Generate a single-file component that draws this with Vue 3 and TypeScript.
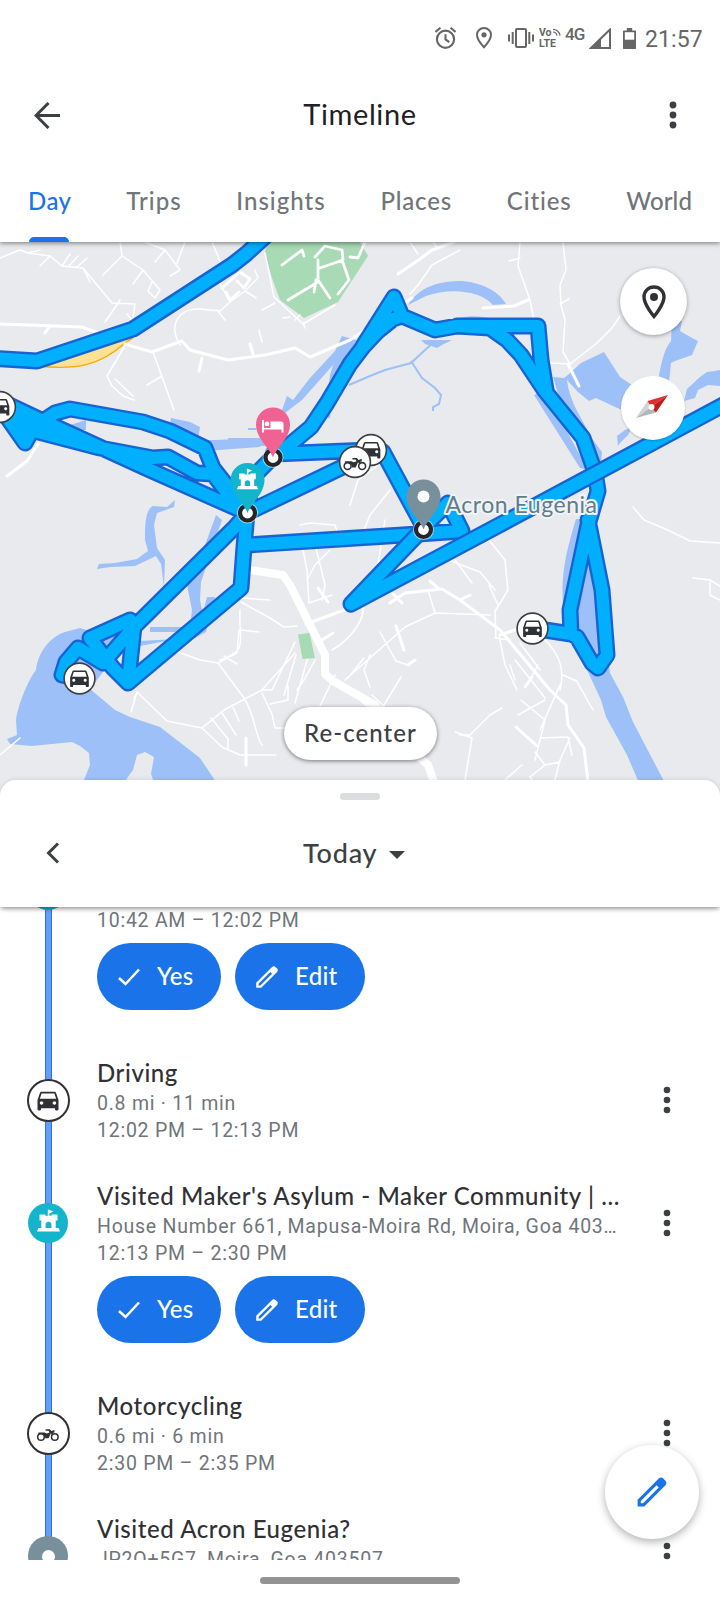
<script setup lang="ts">
interface Tab { label: string; cls: string }
interface Entry {
  kind: 'visit' | 'move'
  icon: 'castle' | 'car' | 'moto' | 'pin'
  title: string
  detail: string
  time: string
  cls: string
}
interface Marker { x: number; y: number; icon: 'car' | 'moto' }
interface Pin { x: number; y: number; color: string; icon: 'bed' | 'castle' | 'dot' }

const tabs: Tab[] = [
  { label: 'Day', cls: 'day' },
  { label: 'Trips', cls: 'trips' },
  { label: 'Insights', cls: 'insights' },
  { label: 'Places', cls: 'places' },
  { label: 'Cities', cls: 'cities' },
  { label: 'World', cls: 'world' },
]

const entries: Entry[] = [
  { kind: 'visit', icon: 'castle', title: '', detail: '', time: '10:42 AM – 12:02 PM', cls: 'first' },
  { kind: 'move', icon: 'car', title: 'Driving', detail: '0.8 mi · 11 min', time: '12:02 PM – 12:13 PM', cls: 'driving' },
  { kind: 'visit', icon: 'castle', title: "Visited Maker's Asylum - Maker Community | ...", detail: 'House Number 661, Mapusa-Moira Rd, Moira, Goa 403…', time: '12:13 PM – 2:30 PM', cls: 'maker' },
  { kind: 'move', icon: 'moto', title: 'Motorcycling', detail: '0.6 mi · 6 min', time: '2:30 PM – 2:35 PM', cls: 'motor' },
  { kind: 'visit', icon: 'pin', title: 'Visited Acron Eugenia?', detail: 'JP2Q+5G7, Moira, Goa 403507', time: '', cls: 'acron' },
]

const carPath = 'M18.92 6.01C18.72 5.42 18.16 5 17.5 5h-11c-.66 0-1.21.42-1.42 1.01L3 12v8c0 .55.45 1 1 1h1c.55 0 1-.45 1-1v-1h12v1c0 .55.45 1 1 1h1c.55 0 1-.45 1-1v-8l-2.08-5.99zM6.5 16c-.83 0-1.5-.67-1.5-1.5S5.67 13 6.5 13s1.5.67 1.5 1.5S7.33 16 6.5 16zm11 0c-.83 0-1.5-.67-1.5-1.5s.67-1.5 1.5-1.5 1.5.67 1.5 1.5-.67 1.5-1.5 1.5zM5 11l1.5-4.5h11L19 11H5z'
const pencilPath = 'M20.41 4.94l-1.35-1.35c-.78-.78-2.05-.78-2.83 0L3 16.82V21h4.18L20.41 7.77c.79-.78.79-2.05 0-2.83zM6.41 19.06L5 19v-1.36l9.82-9.82 1.41 1.41-9.82 9.83z'
const castlePath = 'M11.4 1v5.8H9.200V5.800H4v5.400h1.600v6.600H3l-1.200 3h20.400l-1.200-3h-2.600v-6.600H20V5.800h-5.200v1h-2V4.800L16.400 3zM12 12.200a2.600 2.600 0 0 1 2.600 2.600v3H9.400v-3a2.600 2.600 0 0 1 2.600-2.600z'
const motoPath = 'M9.6 6.2h4.2l1.6 1.9 3-1.1v2.6l-1.8.3 1 1.6-1.3.8-1.4-2-2.3 5H9.4l-1.1-2.8L5.2 11H2.4V9.4h6.2l2.2 1 2.7-1-1-1.6H9.6z'

/* Each layer is stroked as one shape, so overlapping legs inside a layer merge. */
const routeLayers: string[] = [
  [
    'M-12 358 37 361 133 329 232 265 246 254 270 232',
    'M2 410 25 443 35 425 43 421',
    'M0 408 35 431 100 448 153 458 168 457 197 473 213 474 238 507',
    'M43 421 55 413 70 409 143 422 170 431 205 448 213 468 238 500 247 513',
    'M-10 396 43 421 150 470 247 513',
    'M247 513 252 478 273 457 287 447 311 427 327 403 350 364 363 347 378 331 393 319 402 316',
    'M363 346 394 297 402 316 435 330 457 326 538 326 541 360 546 390',
    'M457 326 490 328 507 340 521 355 545 391 583 438 595 472 598 491 588 525',
    'M247 513 244 547 241 588 128 683 134 626 130 620 90 638 113 668 128 683',
    'M247 513 235 527 134 627 103 663 78 648 66 662 62 675 80 679',
    'M247 545 403 535 462 531 448 503 423 528',
    'M273 454 371 450 383 452 424 528',
    'M247 513 355 461',
    'M588 520 602 590 607 655 598 668 592 663 577 637 571 634 532 628',
    'M588 525 570 610 571 634',
  ].join(''),
  'M421 531 351 604 490 530 740 396',
]

const water: string[] = [
  'M17 735 16 720C18 705 28 680 36 670C38 652 50 637 65 632L80 628 90 631 130 612 143 620 90 689 115 710 130 717 160 727 200 758 218 785H155L151 774 154 757 145 752 137 755 133 770 122 785H82L90 765 89 753 80 746 72 742 32 746 10 744 7 739z',
  'M175 500 167 507 153 506C145 510 145 525 145 540L148 551 137 559 115 563 99 564 97 569 110 567 135 566 156 556 161 564 164 587 165 560 157 548 154 525 157 513 174 507z',
  'M216 515 205 545 187 585 192 610 190 627H150V632H192L205 626 200 600 201 582 222 520z',
  'M140 641 195 638 206 632 215 597H207L200 624 187 637 140 646z',
  'M170 424 171 418 190 422 200 427 198 440 215 440 260 438V447L205 451 165 437z',
  'M70 425 86 420V430L78 430z',
  'M228 446H280V438H228z',
  'M282 410 287 396 293 400 310 378 335 351 342 336 356 340 350 364 327 403 330 375 333 365 302 400 285 413z',
  'M408 305C420 286 440 281 462 281C485 283 500 293 506 304L493 305C482 291 450 287 426 296z',
  'M421 340H452L442 345 437 348 425 344z',
  'M460 318C475 314 485 318 495 319L470 324z',
  'M553 377 564 378 569 374 581 363 604 352 620 377 632 385 628 413 596 398 589 401 578 392 567 380C570 405 584 420 590 436L602 452 601 463 590 464 560 400z',
  'M545 391 534 395 580 468 588 470z',
  'M672 320 682 321 680 331 692 338 698 341 692 355 675 361 671 363 669 382 658 381C662 360 664 350 671 341z',
  'M684 401 687 389 700 377 707 372 715 371 720 370V386L708 385 698 390 695 398z',
  'M618 446 617 436 625 430 633 426 628 435 620 443z',
  'M576 519C562 565 560 585 565 625L588 672 601 700 606 717 627 755 640 785H666L633 722 623 697 610 673 607 650 590 520z',
]

const roadsThin = 'M0 258 20 250 28 253 40 250M28 253 50 256 62 266 83 268 112 303 135 304 133 318M83 268 90 282M50 256 40 266M62 266 70 254M68 267 78 256M76 268 87 258M120 242 122 256 103 275M122 256 143 270 133 284M143 270 160 290 155 298 148 291 152 282M145 242 165 250 180 270 170 276M165 250 155 262M185 242 177 263M120 300 110 315 105 322M133 322 127 314M126 344 107 376 112 386 123 396 134 400M115 379 133 396M153 352 174 410M162 376 147 385M180 345C168 325 178 308 200 309L220 311 230 302 219 282M217 310 225 320M230 302 245 291 256 298M255 270 258 278 245 291M212 242 222 266M265 253 274 297 303 324 335 305M295 320 300 315M262 310 275 303M303 323 305 328M262 342 259 330M283 318 290 317M410 294 418 285 432 265 460 250M410 242 418 254M433 242 438 249M520 242 518 266 530 300 536 330 531 360M509 261 520 258M563 242 566 270 560 285 561 305 565 320 563 352 570 364 597 343 612 328 620 316M560 304 569 299M536 359 552 363 570 364M633 507 644 520 668 530 690 541 720 543M693 578 710 580 720 586M710 582 710 595 720 600M240 598 270 600M240 610C238 640 250 650 220 660M241 602 270 618 284 627 297 626M241 630 259 632M156 655 178 652 200 660 218 663 244 698C255 715 255 735 262 745M218 663 237 653 239 630M224 656 237 664M134 698 137 692M131 712 137 692 167 721 202 728 222 747 240 755 276 755M202 728 224 710 262 690 295 653M211 718 228 739 228 748M222 713 236 735M232 705 239 721M295 642 272 690 261 690M262 693 272 714 275 728 290 728M270 704 288 700 288 686M302 545 307 570 309 603 332 595M307 580 315 565 330 550M316 548 325 585 322 600M284 695 296 655M315 660 304 680 297 690M310 650 295 703M332 650C350 640 365 620 363 606M345 680 405 627 435 613 490 615M435 613 428 590M380 632 396 661 408 665M370 655 364 670 370 687M372 695 388 710M364 658 348 678M335 675 320 706M401 677 384 705 375 710M342 685 395 730M300 525 310 523 335 525 338 535M350 505 358 480 385 460M360 540 370 515 390 490M378 565 385 520M440 557 480 572 495 590M455 560 472 583M485 535 505 560 508 590 496 610M495 610 496 638M499 635 505 665 517 690M498 605 489 585M495 638 510 640M545 640C560 655 565 670 560 690M563 675 576 681M576 680 593 710M560 685 540 730M515 680 510 665M515 660 535 685 545 698M502 708 490 715 470 735 460 735M545 700 518 715M455 732 472 738 465 780M540 738 568 737M570 738 560 760 555 780M568 737 572 755M521 700 545 720 535 760M535 752 545 765 560 762M545 765 530 777 535 785M522 765 505 780M538 665 530 680M520 643 540 670M0 755 20 738'
const roadsMedium = 'M0 324 82 327 98 333M45 333 50 326M125 344 152 352 182 341 190 350 228 360 265 355 295 348 310 357 350 340 380 320 412 298M202 358 199 371M253 354 250 344M398 274 420 259 432 250 454 242M483 308 514 306 528 300M568 364 579 386M7 476 27 461 38 444M306 624 350 608M390 603 405 593 442 589 460 600 500 630 525 660 550 690 566 705 568 725 584 748 588 782M460 600 470 595M438 588 430 581M396 626 404 650M408 665 415 660M500 635 515 630M246 738 246 765M318 588 328 602M322 640 333 633M393 594 402 603M516 727 537 746M525 687 532 677'
const roadsCampus = 'M282 265 302 250 304 256M315 257 325 246 342 250 343 260 320 268M318 260 318 280 330 298M318 282 288 300M316 280 314 292M342 260 349 280 338 294M350 257 358 258 365 242M222 288 240 272 250 279 244 288 237 281M226 292 230 300 239 292'

const markers: Marker[] = [
  { x: 0, y: 407, icon: 'car' },
  { x: 371, y: 450, icon: 'car' },
  { x: 355, y: 462, icon: 'moto' },
  { x: 79.5, y: 678.5, icon: 'car' },
  { x: 532.5, y: 628.5, icon: 'car' },
]
const pins: Pin[] = [
  { x: 273, y: 457.5, color: '#f06292', icon: 'bed' },
  { x: 247.5, y: 513, color: '#12b5cb', icon: 'castle' },
  { x: 423.5, y: 529.5, color: '#78909c', icon: 'dot' },
]
</script>

<template>
  <main class="screen">
    <header class="top">
      <div class="status">
        <svg class="s-alarm" viewBox="2 1.500 20 21"><circle cx="12" cy="13.200" r="8.200" /><path d="M12 8.400v5l3.600 2.600M7.200 2.200 2.400 6.200M16.800 2.200l4.800 4" /></svg>
        <svg class="s-pin" viewBox="0 0 16 22"><path d="M8 1C4.100 1 1 4 1 7.800c0 5 7 12.400 7 12.400s7-7.400 7-12.400C15 4 11.900 1 8 1z" /><circle cx="8" cy="7.800" r="2.600" class="solid" /></svg>
        <svg class="s-vib" viewBox="0 0 26 20"><rect x="8" y="1" width="10" height="18" rx="1" /><path d="M4.700 4v12M1 6.500v7M21.300 4v12M25 6.500v7" /></svg>
        <span class="volte"><span>Vo<svg viewBox="0 0 9 8"><path d="M0 1c4 0 7 3 8 7M0 4c2 0 4 1.500 4.500 4" /></svg></span><span>LTE</span></span>
        <span class="net">4G</span>
        <svg class="s-signal" viewBox="0 0 22 21"><path d="M21 1.500V20H2z" /><path class="solid" d="M1 20.500 12 10v10.500z" /></svg>
        <svg class="s-bat" viewBox="0 0 13 21"><path class="solid" d="M0 20V3.500C0 2.900.5 2.400 1 2.400h2.800V0h5.400v2.400H12c.6 0 1 .5 1 1.100V20c0 .6-.4 1-1 1H1c-.6 0-1-.4-1-1z" /><path class="hollow" d="M1.800 4.200h9.400v7.500H1.800z" /></svg>
        <span class="clock">21:57</span>
      </div>
      <div class="appbar">
        <svg class="back" viewBox="0 0 27 27"><path d="M26 13.500H2M14.500 1 2 13.500 14.500 26" /></svg>
        <h1>Timeline</h1>
        <svg class="kebab large" viewBox="0 0 8 28"><circle cx="4" cy="4" r="3.400" /><circle cx="4" cy="14" r="3.400" /><circle cx="4" cy="24" r="3.400" /></svg>
      </div>
      <nav class="tabs">
        <a v-for="t in tabs" :key="t.label" :class="['tab', t.cls]">{{ t.label }}</a>
      </nav>
    </header>

    <section class="map">
      <svg class="canvas" viewBox="0 242 720 553">
        <rect x="0" y="242" width="720" height="553" class="land" />
        <path class="park" d="M266 242 265 254 272 278 280 300 304 318 338 302 368 256 360 242z" />
        <path class="beach" d="M38 366C75 370 100 366 125 343L133 338 60 348z" />
        <path v-for="w in water" :key="w" :d="w" class="water" />
        <path class="stream" d="M349 385 370 376 385 370 411 363 425 350 432 344M411 361 422 378 435 388 441 395 439 404 433 407 433 411M330 402 329 418M300 439 312 436 315 428M248 429H256" />
        <path class="thin" :d="roadsThin" />
        <path class="medium" :d="roadsMedium" />
        <path class="campus" :d="roadsCampus" />
        <path class="major" d="M249 570 270 573 283 575 290 585 325 655 325 674 333 681 375 705 400 740 428 765 435 785" />
        <path class="park" d="M298 634.500 309.500 633 315 658 302.500 659z" />
        <g v-for="r in routeLayers" :key="r">
          <path class="edge" :d="r" />
          <path class="route" :d="r" />
        </g>
        <g v-for="m in markers" :key="m.x" :transform="`translate(${m.x} ${m.y})`">
          <circle r="15.400" class="badge" />
          <path v-if="m.icon === 'car'" :d="carPath" transform="translate(-12.500 -13.300) scale(1.040)" class="ink" />
          <g v-else transform="translate(-12.600 -10.600) scale(1.050)" class="moto-g">
            <path :d="motoPath" class="ink" />
            <circle cx="5" cy="14" r="3.300" /><circle cx="18.800" cy="14" r="3.300" />
          </g>
        </g>
        <g v-for="p in pins" :key="p.color" :transform="`translate(${p.x} ${p.y})`">
          <circle r="10.500" class="halo" />
          <circle r="7.500" class="stop" />
          <path :fill="p.color" d="M0 0C-3-9-17-19-17-33a17 17 0 0 1 34 0C17-19 3-9 0 0z" />
          <circle v-if="p.icon === 'dot'" cy="-33" r="6" class="white" />
          <path v-else-if="p.icon === 'castle'" :d="castlePath" transform="translate(-12.500 -45.500) scale(1.040)" class="white" />
          <path v-else class="white" d="M-11-37.500h2v8h6.500v-6.500H8a2.500 2.500 0 0 1 2.500 2.500v8.500h-2v-3H-9v3h-2zM-6-36a2.400 2.400 0 1 1 0 4.800 2.400 2.400 0 0 1 0-4.800z" />
        </g>
        <text x="445.500" y="512.500" class="place" textLength="151.500">Acron Eugenia</text>
      </svg>
      <button class="round locate">
        <svg viewBox="0 0 24 34"><path d="M12 2C6.300 2 2 6.300 2 12c0 7.500 10 19.500 10 19.500S22 19.500 22 12C22 6.300 17.700 2 12 2z" /><circle cx="12" cy="12" r="4" /></svg>
      </button>
      <button class="round compass">
        <svg viewBox="0 0 34 26"><path fill="#d0d2d4" d="M1 24 12.500 7 16 13z" /><path fill="#b4b6b9" d="M1 24 16 13 21 18.500z" /><path fill="#e0302c" d="M33 1 12.500 7 16 13z" /><path fill="#c21a1a" d="M33 1 16 13 21 18.500z" /><circle cx="16.500" cy="13" r="3" fill="#fff" /></svg>
      </button>
      <button class="recenter">Re-center</button>
    </section>

    <section class="sheet">
      <header class="sheet-head">
        <i class="grip"></i>
        <svg class="prev" viewBox="0 0 14 22"><path d="M12 1.500 2.500 11 12 20.500" /></svg>
        <span class="today">Today<i class="caret"></i></span>
      </header>
      <div class="viewport">
        <ul class="list">
          <li v-for="e in entries" :key="e.cls" :class="['row', e.kind, e.cls]">
            <div class="rail">
              <span :class="['node', e.icon]">
                <svg v-if="e.icon === 'car'" viewBox="0 0 24 24" class="g-car"><path :d="carPath" /></svg>
                <svg v-else-if="e.icon === 'castle'" viewBox="0 0 24 24" class="g-castle"><path :d="castlePath" /></svg>
                <svg v-else-if="e.icon === 'moto'" viewBox="0 0 24 24" class="g-moto"><path :d="motoPath" /><circle cx="5" cy="14" r="3.300" /><circle cx="18.800" cy="14" r="3.300" /></svg>
                <i v-else class="hole"></i>
              </span>
            </div>
            <div class="body">
              <h2>{{ e.title }}</h2>
              <p class="detail">{{ e.detail }}</p>
              <p class="time">{{ e.time }}</p>
              <div v-if="e.kind === 'visit'" class="actions">
                <button class="yes"><svg viewBox="0 0 22 18"><path d="M1 10 7.500 16 21 1.500" /></svg>Yes</button>
                <button class="edit"><svg viewBox="2 2 20 20"><path :d="pencilPath" /></svg>Edit</button>
              </div>
            </div>
            <svg class="kebab" viewBox="0 0 8 28"><circle cx="4" cy="4" r="3.300" /><circle cx="4" cy="14" r="3.300" /><circle cx="4" cy="24" r="3.300" /></svg>
          </li>
        </ul>
      </div>
      <footer class="gesture"><i></i></footer>
    </section>
    <button class="fab"><svg viewBox="2 2 20 20"><path :d="pencilPath" /></svg></button>
  </main>
</template>

<style>
html, body { margin: 0; background: #fff; }
</style>

<style scoped>
* { box-sizing: border-box; }
.screen { position: relative; width: 720px; height: 1600px; overflow: hidden; display: flex; flex-direction: column; background: #fff; font-family: Lato, "Open Sans", sans-serif; color: #3c4043; }
h1, h2, p, ul { margin: 0; padding: 0; }
button { border: 0; padding: 0; font: inherit; color: inherit; }
svg { display: block; flex: none; }
.top { position: relative; z-index: 2; height: 242px; flex: none; background: #fff; box-shadow: 0 1px 5px rgba(0,0,0,.5); }
.status { height: 76px; padding: 0 17px 0 0; display: flex; justify-content: flex-end; align-items: center; color: #666; font-family: Roboto, sans-serif; }
.status svg { fill: none; stroke: #666; stroke-width: 2; }
.status .solid { fill: #666; stroke: none; }
.status .hollow { fill: #fff; stroke: none; }
.s-alarm { width: 21px; height: 22px; margin-right: 20px; }
.s-pin { width: 16px; height: 22px; margin-right: 16px; }
.s-vib { width: 26px; height: 20px; margin-right: 5px; }
.volte { width: 23px; display: flex; flex-direction: column; font-size: 10.5px; line-height: 11px; font-weight: 700; margin-right: 3px; }
.volte > span { display: flex; }
.volte svg { width: 8px; height: 8px; stroke-width: 1.4; margin: 1px 0 0 1px; }
.net { font-size: 17px; font-weight: 500; width: 21px; line-height: 20px; margin: 0 3px 9px 0; letter-spacing: -1px; }
.s-signal { width: 22px; height: 21px; margin-right: 12px; }
.s-bat { width: 13px; height: 21px; margin-right: 9px; }
.clock { font-size: 23px; width: 58px; letter-spacing: .1px; line-height: 28px; margin-top: 3px; }
.appbar { height: 78px; display: flex; align-items: center; justify-content: space-between; padding: 0 43px 0 34px; }
.back { width: 27px; height: 27px; fill: none; stroke: #3c4043; stroke-width: 3; }
h1 { font-size: 29px; font-weight: 400; color: #202124; line-height: 40px; letter-spacing: .6px; margin: 0 10px 2px 0; }
.kebab { width: 8px; height: 28px; fill: #3c4043; }
.tabs { height: 88px; display: flex; justify-content: space-between; padding: 0 28px; }
.tab { position: relative; font-size: 24px; line-height: 30px; padding-top: 32px; color: #70757a; font-weight: 500; white-space: nowrap; letter-spacing: .85px; }
.tab.day { color: #1a73e8; letter-spacing: .5px; }
.tab.trips, .tab.insights { letter-spacing: 1px; }
.tab.world { letter-spacing: .1px; }
.tab.day::after { content: ""; position: absolute; left: 1px; width: 40px; bottom: 0; height: 5px; border-radius: 5px 5px 0 0; background: #1a73e8; }
.map { position: relative; height: 553px; flex: none; margin-bottom: -15px; }
.canvas { width: 720px; height: 553px; }
.land { fill: #e8eaed; }
.park { fill: #a8dab5; }
.beach { fill: #fde293; stroke: #f9ab00; stroke-width: 1.3; }
.water { fill: #9dc0f9; }
.stream { fill: none; stroke: #9dc0f9; stroke-width: 2; }
.thin, .medium, .campus, .major { fill: none; stroke: #fff; stroke-linejoin: round; stroke-linecap: round; }
.thin { stroke-width: 1.5; }
.medium { stroke-width: 3; }
.campus { stroke-width: 2.8; }
.major { stroke-width: 8; }
.edge, .route { fill: none; stroke-linejoin: round; stroke-linecap: round; }
.edge { stroke: #1763d2; stroke-width: 17px; }
.route { stroke: #00b0ff; stroke-width: 12.2px; }
.badge { fill: #fff; stroke: #3c4043; stroke-width: 1.6; }
.ink { fill: #2f3235; }
.moto-g circle { fill: none; stroke: #2f3235; stroke-width: 1.5; }
.halo { fill: #fff; opacity: .55; }
.stop { fill: #fff; stroke: #262626; stroke-width: 4.2; }
.white { fill: #fff; }
.place { font: 400 23px Lato, sans-serif; fill: #607d8b; stroke: #f1f3f4; stroke-width: 4px; stroke-linejoin: round; paint-order: stroke; }
.round { position: absolute; display: grid; place-items: center; border-radius: 50%; background: #fff; box-shadow: 0 1px 4px rgba(0,0,0,.35); }
.locate { left: 620px; top: 26px; width: 67px; height: 67px; }
.locate svg { width: 24px; height: 34px; fill: none; stroke: #303134; stroke-width: 3.4; }
.locate circle { fill: #303134; stroke: none; }
.compass { left: 621px; top: 134px; width: 64px; height: 64px; box-shadow: 0 1px 2px rgba(0,0,0,.2); }
.compass svg { width: 34px; height: 26px; margin-top: -2px; margin-left: -3px; }
.recenter { position: absolute; left: 284px; top: 465px; width: 153px; height: 53px; padding-bottom: 3px; border-radius: 27px; background: #fff; box-shadow: 0 1px 4px rgba(0,0,0,.5); font-size: 24px; font-weight: 500; letter-spacing: 1.05px; }
.sheet { position: relative; z-index: 1; flex: 1; display: flex; flex-direction: column; min-height: 0; border-radius: 16px 16px 0 0; background: #fff; box-shadow: 0 -1px 4px rgba(0,0,0,.08); }
.sheet-head { position: relative; z-index: 1; height: 127px; flex: none; display: flex; align-items: center; padding: 19px 46px 0; background: #fff; border-radius: 16px 16px 0 0; box-shadow: 0 3px 4px -1px rgba(0,0,0,.4); }
.grip { position: absolute; left: 340px; top: 13px; width: 40px; height: 7px; border-radius: 4px; background: #dadce0; }
.prev { width: 14px; height: 22px; fill: none; stroke: #3c4043; stroke-width: 3; }
.today { display: flex; align-items: center; margin-left: 243px; font-size: 27px; font-weight: 500; line-height: 34px; letter-spacing: .8px; }
.caret { border: 8px solid transparent; border-top-color: #3c4043; border-bottom: 0; margin: 3px 0 0 12px; }
.viewport { height: 653px; overflow: hidden; }
.list { list-style: none; margin-top: -67px; }
.row { display: flex; height: 123px; position: relative; }
.row.visit { height: 210px; }
.rail { position: relative; width: 97px; flex: none; background: linear-gradient(90deg, #2f74dc 0 1px, #669df6 1px 6px, #2f74dc 6px) 45px 0 / 7px 100% no-repeat; }
.node { position: absolute; left: 28px; top: 30px; width: 40px; height: 40px; border-radius: 50%; display: grid; place-items: center; }
.node.car, .node.moto { left: 26.5px; top: 28.5px; width: 43px; height: 43px; background: #fff; border: 2.5px solid #303134; }
.node.castle { background: #12b5cb; }
.node.pin { background: #78909c; }
.g-car { width: 28px; height: 28px; fill: #303134; }
.g-castle { width: 27px; height: 27px; fill: #fff; margin-top: -3px; }
.g-moto { width: 24px; height: 24px; fill: #303134; margin-top: 3px; }
.g-moto circle { fill: none; stroke: #303134; stroke-width: 1.5; }
.hole { width: 13px; height: 13px; border-radius: 50%; background: #fff; }
.body { width: 540px; white-space: nowrap; }
h2 { height: 39px; line-height: 30px; padding-top: 8px; font-size: 24px; font-weight: 500; letter-spacing: .58px; color: #303134; }
.detail, .time { font-family: Roboto, sans-serif; font-size: 19.5px; line-height: 26px; height: 26px; letter-spacing: .75px; color: #70757a; }
.detail { margin-top: 2px; height: 27px; }
.actions { display: flex; gap: 14px; margin-top: 9px; }
.actions button { height: 67px; border-radius: 34px; background: #1a73e8; color: #fff; display: flex; align-items: center; font-size: 24px; font-weight: 500; padding-bottom: 2px; }
.actions .yes { width: 124px; padding-left: 21px; letter-spacing: .3px; }
.yes svg { width: 22px; height: 18px; margin: 2px 17px 0 0; fill: none; stroke: #fff; stroke-width: 2.5; }
.actions .edit { width: 130px; padding-left: 19px; letter-spacing: .3px; }
.edit svg { width: 24px; height: 24px; margin: 2px 16px 0 1px; fill: #fff; }
.row > .kebab { margin: 36px 0 0 26px; }
.gesture { height: 40px; display: flex; justify-content: center; align-items: center; }
.gesture i { width: 200px; height: 7px; border-radius: 4px; background: #939393; }
.fab { position: absolute; z-index: 3; left: 605px; top: 1445px; width: 94px; height: 94px; border-radius: 50%; background: #fff; display: grid; place-items: center; box-shadow: 0 3px 9px rgba(0,0,0,.3); }
.fab svg { width: 32px; height: 32px; fill: #1a73e8; }
</style>
